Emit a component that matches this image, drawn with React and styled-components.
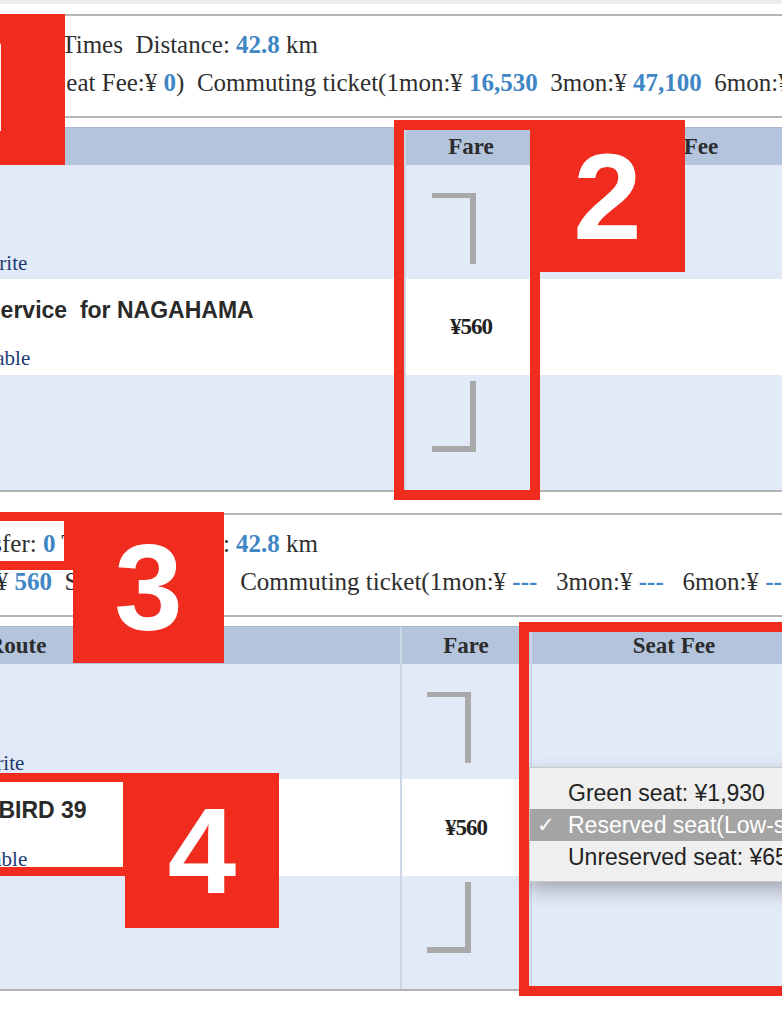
import React from "react";
import styled, { createGlobalStyle } from "styled-components";

const GlobalStyle = createGlobalStyle`
  html, body {
    margin: 0;
    padding: 0;
    background: #fff;
  }
  body {
    width: 782px;
    height: 1009px;
    overflow: hidden;
  }
`;

const RED = "#f02c1e";

const Viewport = styled.div`
  position: relative;
  width: 782px;
  height: 1009px;
  overflow: hidden;
  background: #fff;
`;

const TopStrip = styled.div`
  height: 4px;
  background: #ececec;
`;

const Page = styled.div`
  width: 1200px;
  margin-left: -366px;
  padding-top: 10px;
  font-family: "Liberation Serif", "Times New Roman", serif;
  color: #2e2e2e;
`;

const Summary = styled.div`
  margin-top: ${(p) => p.$gap || 0}px;
  border-top: 2px solid #b5b5b5;
  border-bottom: 2px solid #b5b5b5;
  padding: 10px 0 14px 312px;
  font-size: 25px;
  line-height: 38px;
  white-space: nowrap;
`;

const Line = styled.div`
  text-indent: ${(p) => p.$indent || 0}px;
`;

const Num = styled.b`
  color: #3f86c5;
`;

const Table = styled.div`
  display: grid;
  grid-template-columns: ${(p) => p.$cols};
  grid-template-rows: 37px ${(p) => p.$rows.map((r) => `${r}px`).join(" ")};
  margin-top: 9px;
  border-top: 1px solid #a9b6cc;
  border-bottom: 2px solid #b3b3b3;
`;

const HeadCell = styled.div`
  background: #b4c4dd;
  border-left: ${(p) => (p.$first ? "none" : "2px solid #cdd6e4")};
  font-size: 23px;
  font-weight: bold;
  color: #2c2c2c;
  display: flex;
  align-items: center;
  justify-content: center;
`;

const Cell = styled.div`
  background: ${(p) => (p.$alt ? "#e2e9f7" : "#ffffff")};
  border-left: ${(p) => (p.$first ? "none" : "2px solid #cdd6e4")};
  display: flex;
  flex-direction: column;
  align-items: ${(p) => (p.$center ? "center" : "flex-start")};
  justify-content: ${(p) => p.$justify || "flex-start"};
  padding-left: ${(p) => p.$pad || 0}px;
  box-sizing: border-box;
`;

const StationCell = styled(Cell)`
  padding-top: 18px;
  padding-bottom: 3px;
`;

const TrainCell = styled(Cell)`
  padding-top: 18px;
  padding-bottom: 4px;
`;

const Station = styled.div`
  font-family: "Liberation Sans", Arial, sans-serif;
  font-weight: bold;
  font-size: 23px;
  line-height: 26px;
  color: #2a2a2a;
`;

const TrainName = styled.div`
  font-family: "Liberation Sans", Arial, sans-serif;
  font-weight: bold;
  font-size: 23px;
  line-height: 26px;
  color: #2a2a2a;
  white-space: pre;
  margin-left: ${(p) => p.$shift || 0}px;
`;

const LinkText = styled.a`
  font-size: 21px;
  line-height: 26px;
  color: #1d3a72;
  text-decoration: none;
  white-space: nowrap;
`;

const FareText = styled.div`
  font-size: 23px;
  font-weight: bold;
  color: #222;
  letter-spacing: -1px;
`;

const Bracket = styled.div`
  width: 44px;
  height: 71px;
  box-sizing: border-box;
  margin-right: 34px;
  margin-top: ${(p) => (p.$up ? 6 : 28)}px;
  border-right: 6px solid #a9a9a9;
  ${(p) =>
    p.$up
      ? "border-bottom: 6px solid #a9a9a9;"
      : "border-top: 5px solid #a9a9a9;"}
`;

const Menu = styled.div`
  position: absolute;
  left: 529px;
  top: 767px;
  width: 300px;
  padding: 9px 0 8px;
  background: #efefef;
  border: 1px solid #cacaca;
  box-shadow: 0 8px 18px rgba(0, 0, 0, 0.28);
  font-family: "Liberation Sans", Arial, sans-serif;
  font-size: 23px;
  color: #232323;
`;

const MenuItem = styled.div`
  display: flex;
  align-items: center;
  height: 32px;
  white-space: nowrap;
  background: ${(p) => (p.$active ? "#a4a4a4" : "transparent")};
  color: ${(p) => (p.$active ? "#fff" : "inherit")};
`;

const Check = styled.span`
  flex: 0 0 38px;
  padding-left: 7px;
  box-sizing: border-box;
  font-family: "DejaVu Sans", sans-serif;
  font-size: 21px;
`;

const Frame = styled.div`
  position: absolute;
  left: ${(p) => p.$x}px;
  top: ${(p) => p.$y}px;
  width: ${(p) => p.$w}px;
  height: ${(p) => p.$h}px;
  border: ${(p) => p.$b || 10}px solid ${RED};
  box-sizing: border-box;
`;

const Tag = styled.div`
  position: absolute;
  left: ${(p) => p.$x}px;
  top: ${(p) => p.$y}px;
  width: ${(p) => p.$w}px;
  height: ${(p) => p.$h}px;
  padding-left: ${(p) => p.$nudge || 0}px;
  box-sizing: border-box;
  background: ${RED};
  color: #fff;
  font-family: ${(p) => p.$font || '"Liberation Sans", Arial'}, sans-serif;
  font-weight: bold;
  font-size: 123px;
  line-height: 1;
  display: flex;
  align-items: center;
  justify-content: center;
`;

const results = [
  {
    gap: 0,
    line2: (
      <Line $indent={-22}>
        (Fare:¥ <Num>560</Num>{"\u00a0"} Seat Fee:¥ <Num>0</Num>){"\u00a0"}{" "}
        Commuting ticket(1mon:¥ <Num>16,530</Num>{"\u00a0"} 3mon:¥{" "}
        <Num>47,100</Num>{"\u00a0"} 6mon:¥ <Num>89,250</Num>)
      </Line>
    ),
    cols: "770px 132px 280px",
    rows: [114, 96, 115],
    pad: 265,
    train: "Rapid Service  for NAGAHAMA",
    shift: 16,
  },
  {
    gap: 21,
    line2: (
      <Line $indent={-10}>
        (Fare:¥ <Num>560</Num>{"\u00a0"} Seat Fee:¥ <Num>520</Num>)
        {"\u00a0\u00a0"} Commuting ticket(1mon:¥ <Num>---</Num>
        {"\u00a0\u00a0"} 3mon:¥ <Num>---</Num>{"\u00a0\u00a0"} 6mon:¥{" "}
        <Num>---</Num>)
      </Line>
    ),
    cols: "766px 130px 286px",
    rows: [115, 97, 113],
    pad: 262,
    train: "THUNDERBIRD 39",
    shift: -10,
  },
];

const Result = ({ r }) => (
  <>
    <Summary $gap={r.gap}>
      <Line>
        Transfer: <Num>0</Num> Times{"\u00a0"} Distance: <Num>42.8</Num> km
      </Line>
      {r.line2}
    </Summary>
    <Table $cols={r.cols} $rows={r.rows}>
      <HeadCell $first>Route</HeadCell>
      <HeadCell>Fare</HeadCell>
      <HeadCell>Seat Fee</HeadCell>

      <StationCell $first $alt $pad={r.pad} $justify="space-between">
        <Station>OSAKA</Station>
        <LinkText href="#">Add to favorite</LinkText>
      </StationCell>
      <Cell $alt $center>
        <Bracket />
      </Cell>
      <Cell $alt />

      <TrainCell $first $pad={r.pad} $justify="space-between">
        <TrainName $shift={r.shift}>{r.train}</TrainName>
        <LinkText href="#">Show timetable</LinkText>
      </TrainCell>
      <Cell $center $justify="center">
        <FareText>¥560</FareText>
      </Cell>
      <Cell />

      <StationCell $first $alt $pad={r.pad}>
        <Station>KYOTO</Station>
      </StationCell>
      <Cell $alt $center>
        <Bracket $up />
      </Cell>
      <Cell $alt />
    </Table>
  </>
);

export default function App() {
  return (
    <Viewport>
      <GlobalStyle />
      <TopStrip />
      <Page>
        {results.map((r, i) => (
          <Result key={i} r={r} />
        ))}
      </Page>

      <Menu>
        <MenuItem>
          <Check />
          Green seat: ¥1,930
        </MenuItem>
        <MenuItem $active>
          <Check>✓</Check>
          Reserved seat(Low-season): ¥1,230
        </MenuItem>
        <MenuItem>
          <Check />
          Unreserved seat: ¥650
        </MenuItem>
      </Menu>

      <Tag $x={-89} $y={14} $w={154} $h={151} $font="Roboto" $nudge={0}>
        1
      </Tag>
      <Frame $x={394} $y={120} $w={146} $h={380} />
      <Tag $x={530} $y={120} $w={155} $h={152}>
        2
      </Tag>
      <Frame $x={-100} $y={512} $w={173} $h={58} $b={9} />
      <Tag $x={73} $y={512} $w={151} $h={151}>
        3
      </Tag>
      <Frame $x={-100} $y={773} $w={232} $h={103} $b={9} />
      <Tag $x={125} $y={773} $w={154} $h={155}>
        4
      </Tag>
      <Frame $x={519} $y={622} $w={300} $h={374} />
    </Viewport>
  );
}
